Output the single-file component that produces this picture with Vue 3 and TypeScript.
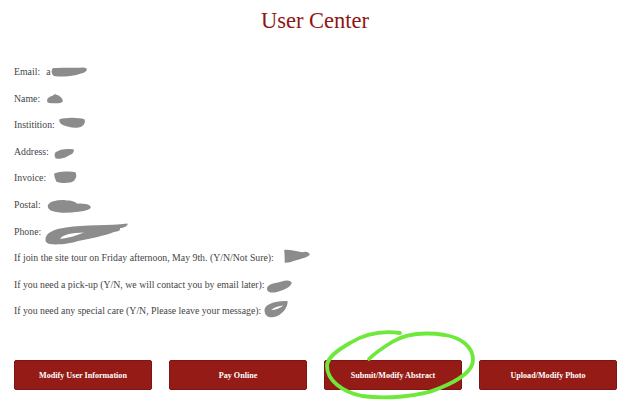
<script setup lang="ts">
interface Row { label: string; value: string }
const rows: Row[] = [
  { label: 'Email:', value: 'a' },
  { label: 'Name:', value: '' },
  { label: 'Institition:', value: '' },
  { label: 'Address:', value: '' },
  { label: 'Invoice:', value: '' },
  { label: 'Postal:', value: '' },
  { label: 'Phone:', value: '' },
  { label: 'If join the site tour on Friday afternoon, May 9th. (Y/N/Not Sure):', value: '' },
  { label: 'If you need a pick-up (Y/N, we will contact you by email later):', value: '' },
  { label: 'If you need any special care (Y/N, Please leave your message):', value: '' },
]
const buttons: string[] = ['Modify User Information', 'Pay Online', 'Submit/Modify Abstract', 'Upload/Modify Photo']
</script>

<template>
  <div class="page">
    <h1 class="title">User Center</h1>
    <div class="rows">
      <div v-for="row in rows" :key="row.label" class="row">{{ row.label }}<span class="value">{{ row.value }}</span></div>
    </div>
    <div class="actions">
      <button v-for="b in buttons" :key="b" class="btn" type="button">{{ b }}</button>
    </div>
    <svg class="overlay" viewBox="0 0 630 401" width="630" height="401" aria-hidden="true">
      <g fill="#8c8c8c" stroke="#8c8c8c" stroke-width="1.6" stroke-linejoin="round">
        <path d="M53 69 C60 68 70 69 77 68.500 C81 68.500 85 68 86 69 C86 71.500 83 72.500 80 73 C74 75.500 62 76 56 75.500 C52 75.500 52 71 53 69Z" />
        <path d="M48 99.500 C49 97.500 51 97 53 96.500 L55 95 C58 96 62 97.500 62 101 C62 103 49 103 48 101.500Z" />
        <path d="M60 120 C66 118 78 118 84 120 C85 122.500 83 126.500 77 127 C72 127.500 69 126 65 125 C62 124 60 122 60 120Z" />
        <path d="M56 153 C60 150 68 149.500 73 150 C73.500 152.500 71 154 68 155 C64 158 58 158.500 56 157.500 C55 156 55 154.500 56 153Z" />
        <path d="M55 174 C60 172.500 70 171.500 75 173 C76 176 75.500 180 71 181.500 C65 183 59 182 57 181 C56 178.500 54.500 176 55 174Z" />
        <path d="M48.500 206 C49 202.500 56 200.500 66 201 C72 201 75 202.500 77 204.500 C83 204 89.500 205 90 207.500 C88.500 210.500 78 211.500 66 212 C56 212 48.500 210 48.500 206Z" />
        <path d="M285 250.500 C290 250 296 251.500 302 253 C306 252 308 252.500 309 254.500 C306.500 257.500 298 258.500 294 260 C291 261.500 288 262 285.500 262 C285.500 258 285.500 254 285 250.500Z" />
        <path d="M268 287.500 C270 284 276 284 281 282.500 C286 281 290 281 291 283 C289.500 287 282 290 276 291.500 C270 292.500 267 291 268 287.500Z" />
      </g>
      <path d="M45.500 240 C45 233 54 229 66 227.500 C84 224.500 110 226 127.500 223.500 C128.500 226 123 228 120 228 C121 230.500 118 231.500 114 232 C104 236 92 238 78 241 C70 244 56 245 50 244 C47 243.500 45.500 242 45.500 240Z M60 239 C63 234 72 233 84 232.500 C76 236 68 238 60 239Z" fill="#8c8c8c" fill-rule="evenodd" />
      <path d="M264.500 310 C264.500 305 274 300.500 287.500 301 C288.500 307 282 315.500 274 317 C268 318.500 264.500 315 264.500 310Z M271 310 C275 307 279 306 283.500 305.500 C280 308 276 310 271 310Z" fill="#8c8c8c" fill-rule="evenodd" />
      <path class="circle" d="M400 333 C385 331 366 333 350 343 C336 351 327 358 327 366 C327 380 342 392 362 396 C385 399 420 397 440 388 C460 380 473 370 473 360 C473 347 462 338 445 335 C425 332 405 334 392 342 C384 347 375 353 369 359" />
    </svg>
  </div>
</template>

<style scoped>
.page {
  position: relative;
  width: 630px;
  height: 401px;
  overflow: hidden;
  background: #fff;
  font-family: "Liberation Serif", serif;
}
.title {
  margin: 0;
  padding-top: 7px;
  height: 27px;
  line-height: 27px;
  text-align: center;
  font-size: 22.500px;
  font-weight: 400;
  color: #8f1616;
}
.rows {
  margin-top: 31px;
  padding-left: 14px;
  display: flex;
  flex-direction: column;
  gap: 12px;
}
.row {
  height: 14.600px;
  line-height: 14.600px;
  font-size: 9.800px;
  color: #444;
  white-space: nowrap;
}
.value {
  margin-left: 6px;
}
.actions {
  position: absolute;
  left: 14px;
  top: 360px;
  width: 603px;
  display: grid;
  grid-template-columns: repeat(4, 1fr);
  gap: 17px;
}
.btn {
  height: 30px;
  padding: 0;
  border: 1px solid #7f1512;
  border-radius: 2px;
  background: #941b16;
  color: #fff;
  font-family: "Liberation Serif", serif;
  font-size: 8.150px;
  font-weight: 700;
}
.overlay {
  position: absolute;
  left: 0;
  top: 0;
  pointer-events: none;
}
.circle {
  fill: none;
  stroke: #6fe83c;
  stroke-width: 3.800;
  stroke-linecap: round;
  stroke-linejoin: round;
}
</style>
